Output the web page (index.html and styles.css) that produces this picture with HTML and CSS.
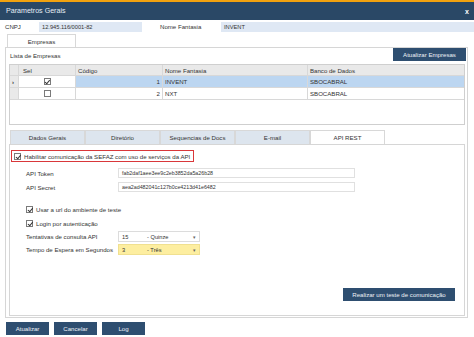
FILE: index.html
```html
<!DOCTYPE html>
<html lang="pt">
<head>
<meta charset="utf-8">
<link rel="stylesheet" href="styles.css">
</head>
<body>
<div class="window">
  <div class="titlebar">
    <span class="title">Parametros Gerais</span>
    <span class="close">x</span>
  </div>
  <div class="header-row">
    <span class="lbl lbl-cnpj">CNPJ</span>
    <span class="field field-cnpj">12.945.116/0001-82</span>
    <span class="lbl lbl-nome">Nome Fantasia</span>
    <span class="field field-nome">INVENT</span>
  </div>
  <div class="tabs main-tabs">
    <div class="tab active tab-empresas">Empresas</div>
  </div>
  <div class="panel outer">
    <div class="list-head">
      <span class="list-title">Lista de Empresas</span>
      <button class="btn btn-atualizar-emp">Atualizar Empresas</button>
    </div>
    <div class="grid">
      <div class="grow ghead">
        <div class="c c-ind"></div>
        <div class="c c-sel">Sel</div>
        <div class="c c-cod">Código</div>
        <div class="c c-nome">Nome Fantasia</div>
        <div class="c c-banco">Banco de Dados</div>
      </div>
      <div class="grow selected">
        <div class="c c-ind">›</div>
        <div class="c c-sel"><span class="chk checked"></span></div>
        <div class="c c-cod num">1</div>
        <div class="c c-nome">INVENT</div>
        <div class="c c-banco">SBOCABRAL</div>
      </div>
      <div class="grow">
        <div class="c c-ind"></div>
        <div class="c c-sel"><span class="chk"></span></div>
        <div class="c c-cod num">2</div>
        <div class="c c-nome">NXT</div>
        <div class="c c-banco">SBOCABRAL</div>
      </div>
    </div>
    <div class="tabs sub-tabs">
      <div class="tab">Dados Gerais</div>
      <div class="tab">Diretório</div>
      <div class="tab">Sequencias de Docs</div>
      <div class="tab">E-mail</div>
      <div class="tab active">API REST</div>
    </div>
    <div class="panel inner">
      <label class="chkline highlight"><span class="chk checked"></span>Habilitar comunicação da SEFAZ com uso de serviços da API</label>
      <div class="form">
        <div class="frow"><span class="flbl">API Token</span><span class="input">fab2daf1aee3ee9c2eb3852da5a26b28</span></div>
        <div class="frow"><span class="flbl">API Secret</span><span class="input">aea2ad482041c127b0ce4213d41e6482</span></div>
        <label class="chkline opt opt-first"><span class="chk checked"></span>Usar a url do ambiente de teste</label>
        <label class="chkline opt"><span class="chk checked"></span>Login por autenticação</label>
        <div class="frow srow"><span class="flbl">Tentativas de consulta API</span><span class="select"><span class="sv">15</span><span class="sd">- Quinze</span><span class="arrow">▾</span></span></div>
        <div class="frow srow"><span class="flbl">Tempo de Espera em Segundos</span><span class="select yellow"><span class="sv">3</span><span class="sd">- Três</span><span class="arrow">▾</span></span></div>
      </div>
      <div class="test-row">
        <button class="btn btn-test">Realizar um teste de comunicação</button>
      </div>
    </div>
  </div>
  <div class="footer">
    <button class="btn btn-foot">Atualizar</button>
    <button class="btn btn-foot">Cancelar</button>
    <button class="btn btn-foot">Log</button>
  </div>
</div>
</body>
</html>
```
FILE: styles.css
```css
* { box-sizing: border-box; }
html, body { margin: 0; padding: 0; }
body {
  width: 474px;
  height: 337px;
  background: #ffffff;
  font-family: "Liberation Sans", Arial, sans-serif;
  font-size: 6.1px;
  color: #333;
  overflow: hidden;
}
.window { width: 474px; height: 337px; display: flex; flex-direction: column; }
.titlebar {
  height: 20px;
  border-top: 2px solid #f2a20f;
  background: #2a4866;
  color: #e8eef5;
  display: flex;
  align-items: center;
  justify-content: space-between;
  padding: 0 5px 0 6px;
  font-size: 7.1px;
}
.close { font-weight: bold; color: #fff; font-size: 7px; }
.header-row {
  display: flex;
  align-items: center;
  height: 11px;
  margin-top: 1px;
}
.lbl-cnpj { width: 39px; padding-left: 5px; }
.field {
  background: #dfe8f4;
  height: 10px;
  line-height: 10px;
  padding-left: 3px;
  font-size: 5.7px;
  color: #333;
}
.field-cnpj { width: 103px; }
.lbl-nome { margin-left: 18px; width: 61px; }
.field-nome { flex: 1; }
.tabs { display: flex; }
.main-tabs { margin: 2px 0 0 7px; height: 13px; }
.tab {
  height: 14px;
  line-height: 14px;
  text-align: center;
  border: 1px solid #d8d8d8;
  border-bottom: none;
  background: #dde5ee;
  width: 75px;
}
.tab.active { background: #fff; }
.tab-empresas { width: 69px; height: 13px; line-height: 13px; }
.panel { border: 1px solid #d6d6d6; background: #fff; }
.outer {
  margin: 0 6px 0 5px;
  height: 271px;
  padding: 0 2px 0 3px;
  display: flex;
  flex-direction: column;
}
.list-head {
  display: flex;
  justify-content: space-between;
  align-items: flex-start;
  height: 16px;
}
.list-title { padding: 4px 0 0 1px; }
.btn {
  background: #2e4e70;
  color: #eef2f7;
  border: none;
  font-family: "Liberation Sans", Arial, sans-serif;
  font-size: 6.1px;
  height: 13px;
  padding: 0;
  cursor: default;
}
.btn-atualizar-emp { width: 73px; margin-right: -1px; }
.grid {
  border: 1px solid #cfcfcf;
  height: 61px;
  display: flex;
  flex-direction: column;
}
.grow { display: flex; height: 12px; border-bottom: 1px solid #d8d8d8; }
.ghead { background: #e9e9e9; height: 11px; }
.c { border-right: 1px solid #d8d8d8; padding: 0 2px; line-height: 11px; white-space: nowrap; }
.c-ind { width: 9px; background: #e9e9e9; padding: 0 0 0 2px; font-weight: bold; }
.c-sel { width: 57px; padding-left: 4px; }
.grow:not(.ghead) .c-sel { display: flex; align-items: center; justify-content: center; padding: 0; }
.c-cod { width: 87px; }
.c-nome { width: 145px; }
.c-banco { flex: 1; border-right: none; }
.num { text-align: right; }
.selected .c-cod, .selected .c-nome, .selected .c-banco { background: #bcd6f1; }
.chk {
  display: inline-block;
  width: 7px;
  height: 7px;
  border: 1px solid #7a7a7a;
  background: #fff;
  position: relative;
  flex: none;
}
.chk.checked::after {
  content: "";
  position: absolute;
  left: 1.5px;
  top: 0px;
  width: 2px;
  height: 3.5px;
  border: solid #333;
  border-width: 0 1px 1px 0;
  transform: rotate(40deg);
}
.sub-tabs { margin: 5px 0 0 1px; height: 14px; }
.inner {
  flex: 1;
  display: flex;
  flex-direction: column;
  align-items: flex-start;
  padding: 5px 0 0 1px;
  margin-bottom: 1px;
}
.chkline { display: flex; align-items: center; gap: 3px; white-space: nowrap; }
.highlight {
  border: 1px solid #d9373a;
  height: 12px;
  padding: 0 3px 0 2px;
}
.form { padding-left: 15px; display: flex; flex-direction: column; margin-top: 4px; }
.frow { display: flex; align-items: center; height: 14px; }
.flbl { width: 92px; white-space: nowrap; }
.input {
  width: 237px;
  height: 10px;
  border: 1px solid #e0e0e0;
  line-height: 8px;
  padding-left: 3px;
  font-size: 5.3px;
}
.opt { height: 14px; }
.opt-first { margin-top: 8px; }
.srow { height: 13px; }
.select {
  width: 82px;
  height: 11px;
  border: 1px solid #dcdcdc;
  display: flex;
  align-items: center;
  font-size: 5.7px;
  padding: 0 3px;
}
.select.yellow { background: #fdeea0; border-color: #f0e090; }
.sv { width: 25px; }
.sd { flex: 1; }
.arrow { font-size: 5px; color: #666; }
.test-row { margin-top: auto; margin-bottom: 14px; display: flex; justify-content: flex-end; padding-right: 9px; align-self: stretch; }
.btn-test { width: 112px; }
.footer { display: flex; gap: 5px; padding: 4px 0 0 6px; }
.btn-foot { width: 43px; }
```
